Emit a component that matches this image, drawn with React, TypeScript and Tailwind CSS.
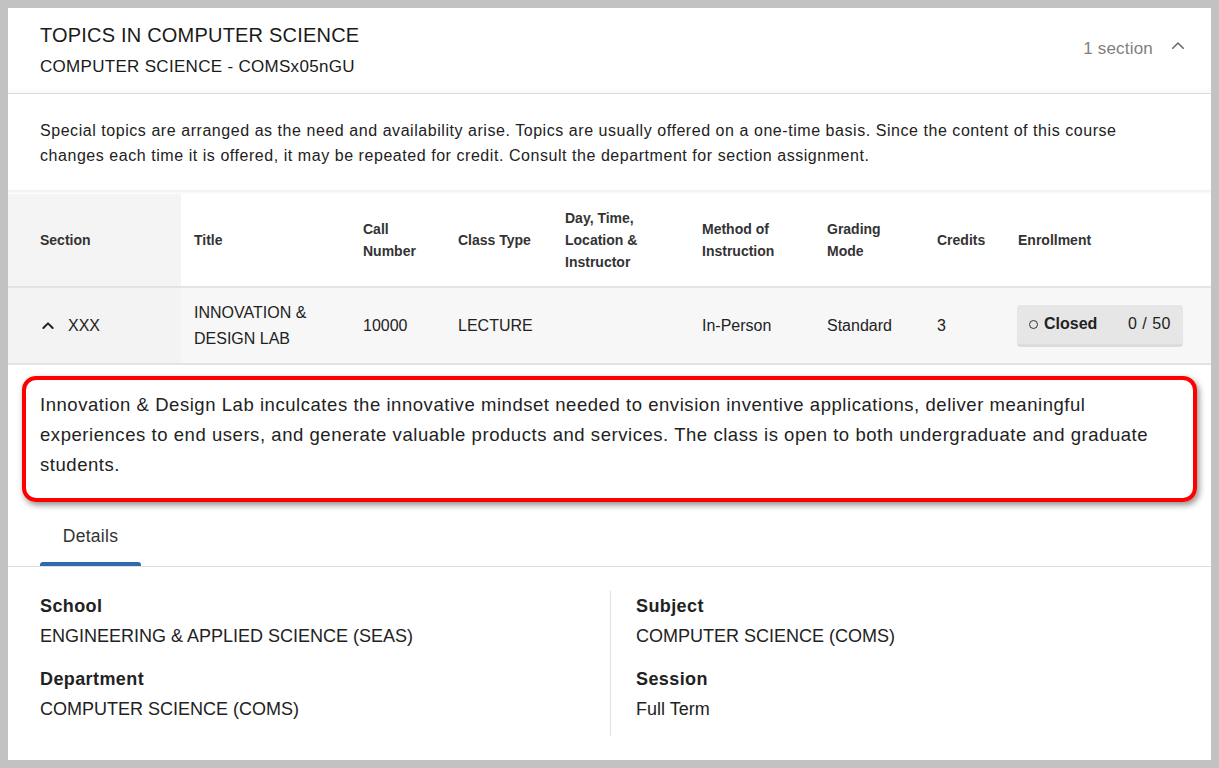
import React from 'react';

const font = { fontFamily: '"Liberation Sans", Arial, sans-serif' };

const ChevronUp: React.FC<{ className?: string; size?: number; stroke?: number }> = ({ className, size = 16, stroke = 2.5 }) => (
  <svg width={size} height={size} viewBox="0 0 24 24" fill="none" stroke="currentColor" strokeWidth={stroke} strokeLinecap="round" strokeLinejoin="round" className={className}>
    <path d="M5 15l7-7 7 7" />
  </svg>
);

const columns = [
  { label: 'Section', w: 'w-[173px] pl-8 bg-[#f4f4f4]' },
  { label: 'Title', w: 'w-[170px] pl-[13px]' },
  { label: 'Call Number', w: 'w-[95px] pl-3 pr-5' },
  { label: 'Class Type', w: 'w-[107px] pl-3' },
  { label: 'Day, Time, Location & Instructor', w: 'w-[137px] pl-3 pr-8' },
  { label: 'Method of Instruction', w: 'w-[125px] pl-3 pr-5' },
  { label: 'Grading Mode', w: 'w-[110px] pl-3 pr-6' },
  { label: 'Credits', w: 'w-[81px] pl-3' },
  { label: 'Enrollment', w: 'w-[205px] pl-3' },
];

export default function App() {
  return (
    <div className="w-[1219px] h-[768px] bg-[#c2c2c2] p-2 overflow-hidden text-[#222]" style={font}>
      <div className="bg-white h-full">
        {/* header */}
        <div className="flex items-start justify-between pl-8 pr-6 pt-[13px] pb-[14px] border-b border-[#dcdcdc] shadow-[inset_0_-8px_8px_-8px_rgba(0,0,0,0.06)]">
          <div>
            <h1 className="text-[20px] leading-[28px] tracking-[0.2px] text-[#1a1a1a]">TOPICS IN COMPUTER SCIENCE</h1>
            <p className="text-[17px] leading-[24px] mt-[6px] tracking-[0.3px] text-[#1a1a1a]">COMPUTER SCIENCE - COMSx05nGU</p>
          </div>
          <div className="flex items-center gap-[16px] mt-[15px] text-[#808080]">
            <span className="text-[17px] tracking-[0.2px]">1 section</span>
            <ChevronUp size={18} stroke={2} className="text-[#666] -mt-[6px]" />
          </div>
        </div>

        {/* description */}
        <p className="pl-8 pr-[50px] pt-[24px] pb-[22px] text-[16px] tracking-[0.55px] leading-[25px] text-[#222]">
          Special topics are arranged as the need and availability arise. Topics are usually offered on a one-time basis. Since the content of this course changes each time it is offered, it may be repeated for credit. Consult the department for section assignment.
        </p>

        {/* table */}
        <div className="bg-gradient-to-b from-[#efefef] to-white h-[4px]" />
        <table className="w-full border-collapse table-fixed">
          <thead>
            <tr className="h-[93px] border-b-2 border-[#e3e3e3]">
              {columns.map((c) => (
                <th key={c.label} className={`${c.w} text-left align-middle font-bold text-[14px] leading-[22px] text-[#333]`}>
                  {c.label}
                </th>
              ))}
            </tr>
          </thead>
          <tbody>
            <tr className="h-[77px] bg-[#f7f7f7] border-b-2 border-[#e3e3e3] text-[16px] leading-[26px] text-[#222]">
              <td className="pl-8 bg-[#f3f3f3]">
                <div className="flex items-center gap-[12px]">
                  <ChevronUp size={16} stroke={3} className="text-[#222]" />
                  <span>XXX</span>
                </div>
              </td>
              <td className="pl-[13px] pr-6">INNOVATION &amp; DESIGN LAB</td>
              <td className="pl-3">10000</td>
              <td className="pl-3">LECTURE</td>
              <td className="pl-3"></td>
              <td className="pl-3">In-Person</td>
              <td className="pl-3">Standard</td>
              <td className="pl-3">3</td>
              <td className="pl-[11px] pr-[28px]">
                <div className="flex items-center justify-between h-[42px] bg-[#e6e6e6] rounded-[4px] border-b-[3px] border-[#dcdcdc] pl-[12px] pr-[12px]">
                  <div className="flex items-center gap-[6px]">
                    <span className="w-[9px] h-[9px] rounded-full border border-[#333] inline-block" />
                    <span className="font-bold">Closed</span>
                  </div>
                  <span className="tracking-[0.5px]">0 / 50</span>
                </div>
              </td>
            </tr>
          </tbody>
        </table>

        {/* highlighted description */}
        <div className="mx-[14px] mt-[11px] border-4 border-[#ff0000] rounded-[14px] shadow-[2px_3px_6px_rgba(0,0,0,0.45)] pl-[14px] pr-6 pt-[10px] pb-[18px]">
          <p className="text-[18.5px] tracking-[0.55px] leading-[30px] text-[#222]">
            Innovation &amp; Design Lab inculcates the innovative mindset needed to envision inventive applications, deliver meaningful experiences to end users, and generate valuable products and services. The class is open to both undergraduate and graduate students.
          </p>
        </div>

        {/* tabs */}
        <div className="mt-[13px] border-b border-[#dedede] pl-8 flex">
          <div className="flex flex-col w-[101px]">
            <span className="text-[17.5px] tracking-[0.3px] text-center leading-[26px] text-[#333] pt-[8px] pb-[13px]">Details</span>
            <div className="h-[4px] bg-[#2f6aad] rounded-t-[3px]" />
          </div>
        </div>

        {/* details */}
        <div className="grid grid-cols-[603px_1fr] pt-[24px]">
          <div className="pl-8 border-r border-[#e0e0e0] pb-[12px]">
            <div className="text-[18px] tracking-[0.4px] leading-[30px] font-bold text-[#222]">School</div>
            <div className="text-[18px] leading-[30px] text-[#222]">ENGINEERING &amp; APPLIED SCIENCE (SEAS)</div>
            <div className="text-[18px] tracking-[0.4px] leading-[30px] font-bold text-[#222] mt-[13px]">Department</div>
            <div className="text-[18px] leading-[30px] text-[#222]">COMPUTER SCIENCE (COMS)</div>
          </div>
          <div className="pl-[25px]">
            <div className="text-[18px] tracking-[0.4px] leading-[30px] font-bold text-[#222]">Subject</div>
            <div className="text-[18px] leading-[30px] text-[#222]">COMPUTER SCIENCE (COMS)</div>
            <div className="text-[18px] tracking-[0.4px] leading-[30px] font-bold text-[#222] mt-[13px]">Session</div>
            <div className="text-[18px] leading-[30px] text-[#222]">Full Term</div>
          </div>
        </div>
      </div>
    </div>
  );
}
